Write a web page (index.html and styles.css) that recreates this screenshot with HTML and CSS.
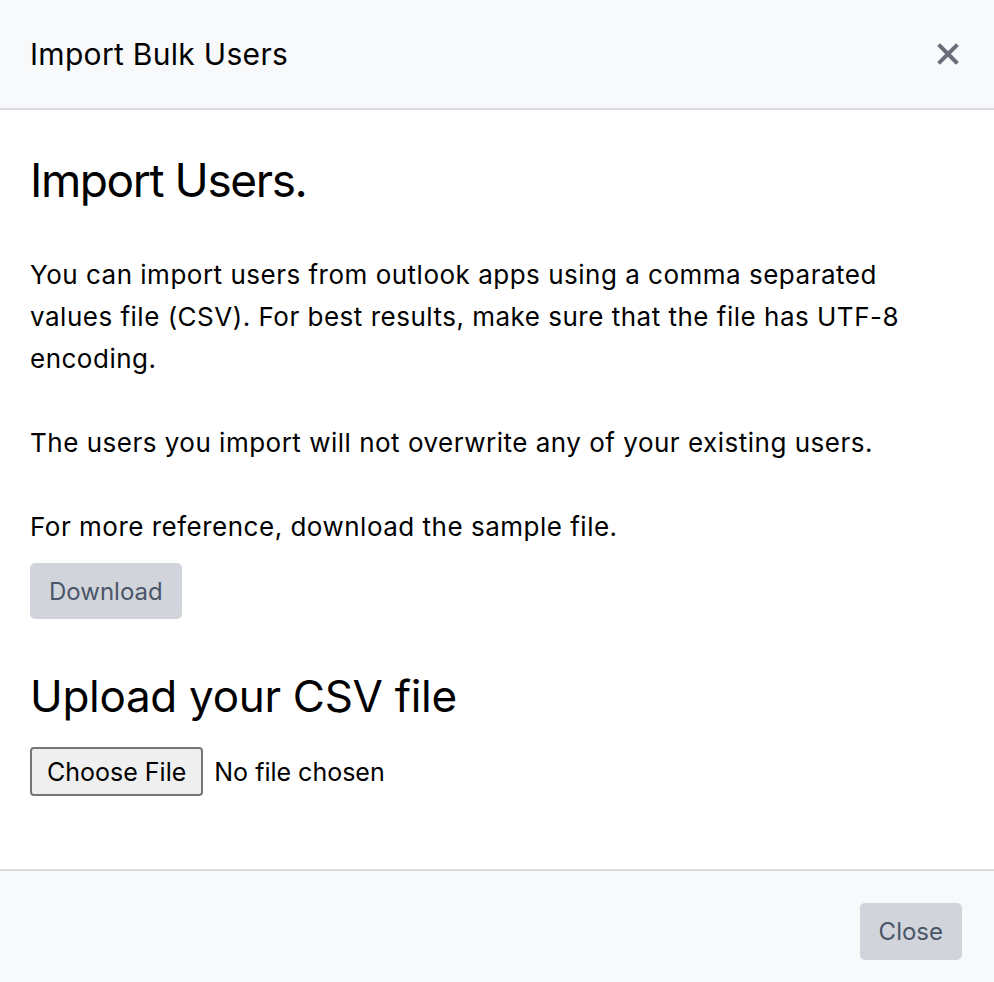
FILE: index.html
```html
<!DOCTYPE html>
<html>
<head>
<meta charset="utf-8">
<link rel="stylesheet" href="styles.css">
</head>
<body>
<div class="modal">
  <div class="modal-header">
    <h5 class="modal-title">Import Bulk Users</h5>
    <button class="btn-close" aria-label="Close">
      <svg width="22" height="22" viewBox="0 0 22 22"><path d="M3 3 L19 19 M19 3 L3 19" stroke="#6c6f7a" stroke-width="4" stroke-linecap="square"/></svg>
    </button>
  </div>
  <div class="modal-body">
    <h1 class="title">Import Users.</h1>
    <p class="text">You can import users from outlook apps using a comma separated values file (CSV). For best results, make sure that the file has UTF-8 encoding.</p>
    <p class="text">The users you import will not overwrite any of your existing users.</p>
    <p class="text tight">For more reference, download the sample file.</p>
    <button class="btn">Download</button>
    <h2 class="subtitle">Upload your CSV file</h2>
    <div class="file">
      <span class="file-btn">Choose File</span>
      <span class="file-name">No file chosen</span>
    </div>
  </div>
  <div class="modal-footer">
    <button class="btn">Close</button>
  </div>
</div>
</body>
</html>
```
FILE: styles.css
```css
html, body {
  margin: 0;
  padding: 0;
  background: #ffffff;
}
body {
  font-family: Inter, "Noto Sans", sans-serif;
  color: #000000;
}
.modal {
  width: 994px;
  display: flex;
  flex-direction: column;
}
.modal-header {
  box-sizing: border-box;
  background: #f8f9fa;
  border-bottom: 2px solid #d9dbdf;
  display: flex;
  align-items: center;
  justify-content: space-between;
  padding: 0 35px 0 30px;
  height: 110px;
}
.modal-title {
  margin: 0;
  font-size: 30px;
  font-weight: 400;
  letter-spacing: 0.3px;
}
.btn-close {
  border: 0;
  background: transparent;
  padding: 0;
  display: flex;
}
.modal-body {
  padding: 40px 30px 0 30px;
  height: 759px;
  box-sizing: border-box;
}
.title {
  margin: 0 0 44px 0;
  font-size: 46px;
  font-weight: 400;
  line-height: 60px;
  letter-spacing: -1.4px;
}
.text {
  margin: 0 0 42px 0;
  max-width: 900px;
  font-size: 26px;
  line-height: 42px;
  letter-spacing: 0.5px;
}
.text.tight {
  margin-bottom: 15px;
}
.btn {
  border: 0;
  border-radius: 5px;
  background: #d1d5db;
  color: #4a5568;
  font-family: Inter, "Noto Sans", sans-serif;
  font-size: 24px;
  padding: 0 19px;
  height: 56px;
}
.subtitle {
  margin: 50px 0 24px 0;
  font-size: 44px;
  font-weight: 400;
  line-height: 54px;
  letter-spacing: -0.3px;
}
.file {
  display: flex;
  align-items: center;
  gap: 11px;
  font-size: 25px;
}
.file-btn {
  display: inline-flex;
  align-items: center;
  height: 49px;
  box-sizing: border-box;
  padding: 0 15px;
  background: #efefef;
  border: 2px solid #767676;
  border-radius: 4px;
}
.modal-footer {
  border-top: 2px solid #d9dbdf;
  background: #f8f9fa;
  height: 113px;
  box-sizing: border-box;
  display: flex;
  align-items: flex-start;
  justify-content: flex-end;
  padding: 32px 32px 0 0;
}
.modal-footer .btn {
  height: 57px;
  padding: 0 19px;
}
```
